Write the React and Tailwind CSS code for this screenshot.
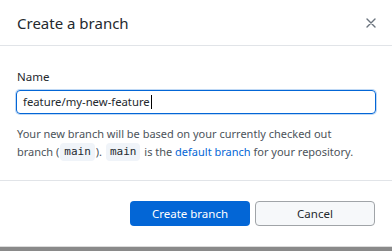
import React from "react";

const mono = { fontFamily: '"DejaVu Sans Mono", "Liberation Mono", monospace' };

export default function App() {
  return (
    <div className="w-[392px] h-[251px] bg-white flex flex-col text-[#24292e]" style={{ fontFamily: '"Segoe UI", "Noto Sans", "Liberation Sans", sans-serif' }}>
      <div className="h-[46px] flex items-center justify-between pl-[17px] pr-[11px] border-b border-[#e1e4e8] shrink-0">
        <div className="text-[15px] leading-none pt-[1px]">Create a branch</div>
        <button className="w-[20px] h-[20px] flex items-center justify-center text-[#6a737d]">
          <svg width="10" height="10" viewBox="0 0 10 10" fill="none" stroke="currentColor" strokeWidth="1.4" strokeLinecap="round">
            <path d="M1 1 L9 9 M9 1 L1 9" />
          </svg>
        </button>
      </div>
      <div className="flex flex-col px-[16px] pt-[23px] h-[135px] border-b border-[#e1e4e8] shrink-0">
        <label className="text-[11.5px] leading-[16px] pl-[1px] mb-[5px]">Name</label>
        <div className="h-[24px] rounded-[4px] border border-[#0366d6] flex items-center px-[6px] text-[11.3px] shadow-[0_0_0_1px_rgba(3,102,214,0.25)]">
          <span>feature/my-new-feature</span>
          <span className="w-[1px] h-[14px] bg-black ml-[1px]"></span>
        </div>
        <p className="text-[11px] leading-[18px] mt-[11px] pl-[1px] text-[#4c535a]">
          Your new branch will be based on your currently checked out
          <br />
          branch (
          <code className="inline-block mx-[1px] px-[4px] leading-[18px] rounded-[4px] bg-[#f0f4f9] text-[11px] text-[#24292e] align-top" style={mono}>main</code>
          ).{" "}
          <code className="inline-block mx-[1px] px-[4px] leading-[18px] rounded-[4px] bg-[#f0f4f9] text-[11px] text-[#24292e] align-top" style={mono}>main</code>
          {" "}is the <span className="text-[#0366d6]">default branch</span> for your repository.
        </p>
      </div>
      <div className="flex-1 flex justify-end items-start pt-[20px] pr-[17px] gap-[5px]">
        <button className="w-[120px] h-[25px] rounded-[4px] bg-[#0366d6] text-white text-[11.5px]">Create branch</button>
        <button className="w-[120px] h-[25px] rounded-[4px] bg-[#f6f8fa] border border-[#a0a4a8] text-[11.5px] text-[#24292e]">Cancel</button>
      </div>
      <div className="h-[1px] bg-[#dcdcdc] shrink-0"></div>
      <div className="h-[4px] bg-[#8a8a8a] shrink-0"></div>
    </div>
  );
}
